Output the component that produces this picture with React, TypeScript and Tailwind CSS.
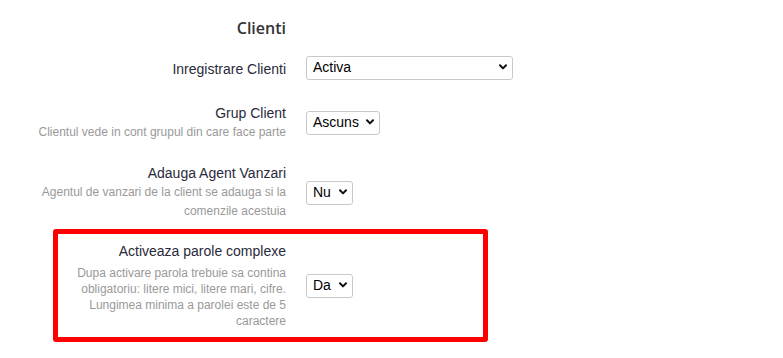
import React from "react";

const Chevron = () => (
  <svg
    className="pointer-events-none absolute right-[6px] top-1/2 -translate-y-1/2"
    width="8"
    height="6"
    viewBox="0 0 8 6"
    fill="none"
  >
    <path d="M1 1.3 L4 4.4 L7 1.3" stroke="#111" strokeWidth="2" strokeLinecap="round" strokeLinejoin="round" />
  </svg>
);

function Sel({ value, w }: { value: string; w: string }) {
  return (
    <div className={`relative h-[24px] ${w}`}>
      <select
        defaultValue={value}
        className="h-full w-full appearance-none rounded-[3px] border border-[#c9c9c9] bg-white pl-[6px] text-[14px] text-black outline-none"
        style={{ fontFamily: '"Liberation Sans", Arial, sans-serif' }}
      >
        <option>{value}</option>
      </select>
      <Chevron />
    </div>
  );
}

export default function App() {
  return (
    <div
      className="h-[358px] w-[783px] bg-white text-[#333]"
      style={{ fontFamily: '"Liberation Sans", Arial, sans-serif' }}
    >
      <div className="pl-[30px] pt-[18px]">
        <div className="flex">
          <div
            className="w-[256px] text-right text-[16px] font-semibold leading-[20px] text-[#333]"
            style={{ fontFamily: '"Open Sans", sans-serif' }}
          >
            Clienti
          </div>
        </div>

        <div className="mt-[17px] flex items-center gap-[20px]">
          <div className="w-[256px] pt-[3px] text-right text-[14px] leading-[20px] text-[#2a2a3a]">
            Inregistrare Clienti
          </div>
          <Sel value="Activa" w="w-[207px]" />
        </div>

        <div className="mt-[24px] flex items-center gap-[20px]">
          <div className="w-[256px] text-right">
            <div className="text-[14px] leading-[20px] text-[#2a2a3a]">Grup Client</div>
            <div className="text-[12px] leading-[18px] text-[#999]">
              Clientul vede in cont grupul din care face parte
            </div>
          </div>
          <Sel value="Ascuns" w="w-[74px]" />
        </div>

        <div className="mt-[22px] flex items-center gap-[20px]">
          <div className="w-[256px] text-right">
            <div className="text-[14px] leading-[20px] text-[#2a2a3a]">Adauga Agent Vanzari</div>
            <div className="text-[12px] leading-[19px] text-[#999]">
              Agentul de vanzari de la client se adauga si la comenzile acestuia
            </div>
          </div>
          <Sel value="Nu" w="w-[47px]" />
        </div>
      </div>

      <div className="ml-[53px] mt-[8px] w-[435px] rounded-[3px] border-[5px] border-[#ff0000] pb-[8px] pl-[8px] pt-[7px]">
        <div className="flex items-center gap-[20px]">
          <div className="w-[220px] text-right">
            <div className="text-[14px] leading-[20px] text-[#2a2a3a]">Activeaza parole complexe</div>
            <div className="mt-[4px] text-[12px] leading-[16px] text-[#999]">
              Dupa activare parola trebuie sa contina obligatoriu: litere mici, litere mari, cifre. Lungimea minima a parolei este de 5 caractere
            </div>
          </div>
          <Sel value="Da" w="w-[47px]" />
        </div>
      </div>
    </div>
  );
}
